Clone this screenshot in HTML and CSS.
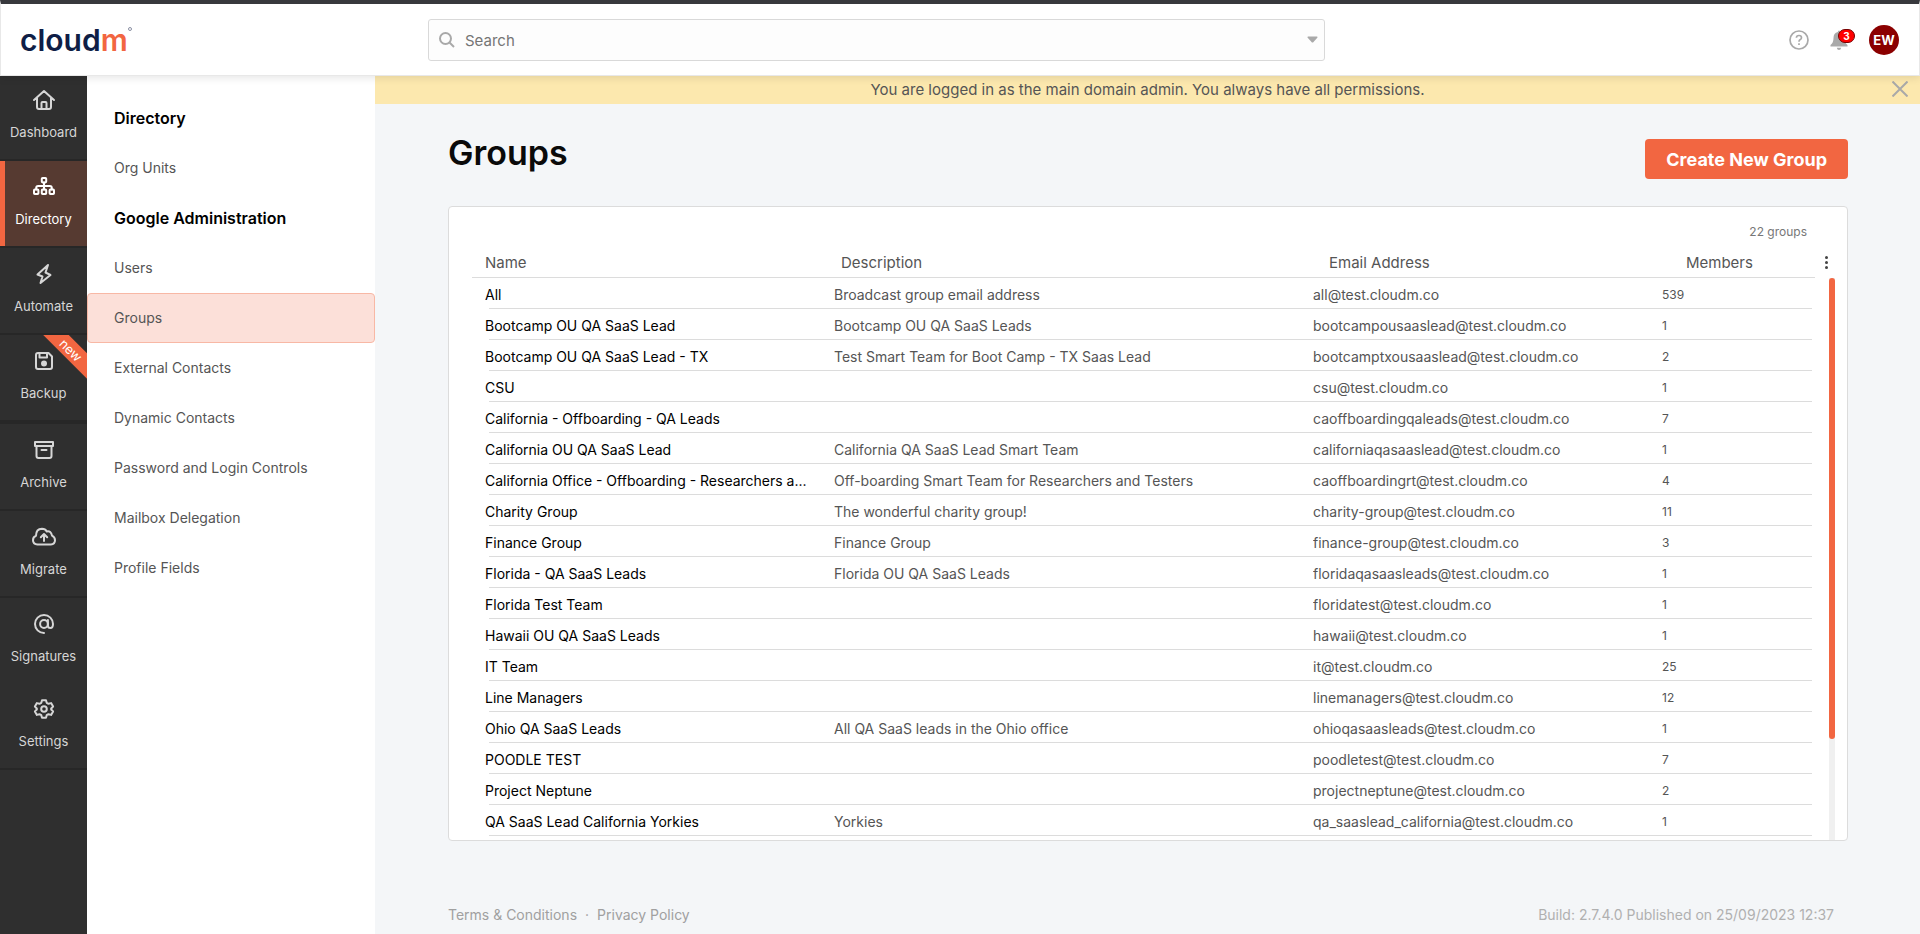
FILE: index.html
```html
<!DOCTYPE html>
<html lang="en">
<head>
<meta charset="UTF-8">
<meta name="viewport" content="width=device-width, initial-scale=1.0">
<title>Groups</title>
<link rel="stylesheet" href="styles.css">
</head>
<body>
<header class="topbar">
<a class="logo" href="#">cloud<span class="logo-m">m</span><span class="logo-mark"></span></a>
<form class="search">
<svg class="search-icon" width="16" height="16" viewBox="0 0 16 16"><circle cx="6.5" cy="6.5" r="5.5"/><path d="M10.5 10.5L15 15"/></svg>
<input type="text" placeholder="Search" aria-label="Search">
<button type="button" class="search-more" aria-label="Search options"><svg width="11" height="7" viewBox="0 0 11 7"><path d="M1 0.5h9Q11 1 10.3 1.8L6.5 6Q5.5 7 4.5 6L0.7 1.8Q0 1 1 0.5z"/></svg></button>
</form>
<div class="topbar-actions">
<button class="icon-btn" aria-label="Help">
<svg width="20" height="20" viewBox="0 0 20 20" fill="none" stroke="#a9a9a9" stroke-width="1.7"><circle cx="10" cy="10" r="9"/><path d="M7.4 7.8Q7.5 5.5 10 5.5Q12.5 5.500 12.5 7.7Q12.5 9 11 9.7Q10 10.2 10 11.7M10 13.200v1.8"/></svg>
</button>
<button class="icon-btn bell" aria-label="Notifications">
<svg width="18" height="20" viewBox="0 0 18 20" fill="#a9a9a9"><path d="M9 0.5Q10.2 0.5 10.2 2Q14.5 3 14.5 8Q14.5 13 17.5 15V16.5H0.5V15Q3.5 13 3.5 8Q3.5 3 7.8 2Q7.8 0.5 9 0.5zM6.8 17.8h4.4Q10.8 20 9 20Q7.2 20 6.8 17.8z"/></svg>
<span class="badge">3</span>
</button>
<button class="avatar">EW</button>
</div>
</header>

<div class="layout">
<nav class="rail">
<a href="#" class="rail-item">
<svg width="24" height="24" viewBox="0 0 24 24"><path d="M2 12L12 3l10 9M5 10v9q0 2 2 2h10q2 0 2-2v-9M9.5 21v-6q0-1 1-1h3q1 0 1 1v6"/></svg>
<span>Dashboard</span>
</a>
<a href="#" class="rail-item active">
<svg width="24" height="24" viewBox="0 0 24 24"><rect x="9.8" y="3" width="4.4" height="4.4" rx="0.8"/><rect x="2" y="14.6" width="4.4" height="4.4" rx="0.8"/><rect x="9.8" y="14.6" width="4.4" height="4.4" rx="0.8"/><rect x="17.6" y="14.6" width="4.4" height="4.4" rx="0.8"/><path d="M12 7.4v7M4.2 14.4v-1.4q0-2 2-2h11.600q2 0 2 2v1.4"/></svg>
<span>Directory</span>
</a>
<a href="#" class="rail-item">
<svg width="24" height="24" viewBox="0 0 24 24"><path d="M16 3L5.5 12.5l5 2L8.5 21L18.500 13l-5-2.500z"/></svg>
<span>Automate</span>
</a>
<a href="#" class="rail-item backup">
<svg width="24" height="24" viewBox="0 0 24 24"><path d="M6 4h10.5L20 7.5V18q0 2-2 2H6q-2 0-2-2V6q0-2 2-2zM7.5 4v4.5h7.5V4"/><circle cx="12" cy="14.5" r="2" fill="#d6d6d6"/></svg>
<span>Backup</span>
<span class="ribbon">new</span>
</a>
<a href="#" class="rail-item">
<svg width="24" height="24" viewBox="0 0 24 24"><path d="M3 4h18v4H3zM4.5 8v10q0 2 2 2h11q2 0 2-2V8M9.5 12h5"/></svg>
<span>Archive</span>
</a>
<a href="#" class="rail-item">
<svg width="24" height="24" viewBox="0 0 24 24"><path d="M5.5 19.5Q1 19 1 15.2Q1 12 4 10.8Q4 4 10 3.8Q13.3 3.8 14.8 6.5Q19 5.5 20 10.6Q23 12 23 15.2Q23 19 18.8 19.5zM12 16V9.500M8.800 12.300L12 9l3.200 3.300"/></svg>
<span>Migrate</span>
</a>
<a href="#" class="rail-item plain">
<svg width="24" height="24" viewBox="0 0 24 24"><circle cx="12" cy="12" r="3.9"/><path d="M15.9 8v5.5q0 2.5 2.5 2.5q2.6 0 2.6-4A9 9 0 1 0 12 21"/></svg>
<span>Signatures</span>
</a>
<a href="#" class="rail-item">
<svg width="24" height="24" viewBox="0 0 24 24"><circle cx="12" cy="12" r="2.8"/><path d="M10 3.200h4l0.700 2.600 1.800 1 2.600-0.700 2 3.500-1.900 1.900v1l1.900 1.900-2 3.500-2.600-0.700-1.800 1-0.700 2.600h-4l-0.700-2.600-1.800-1-2.600 0.700-2-3.500 1.900-1.900v-1L2.900 9.600l2-3.500 2.600 0.700 1.800-1z"/></svg>
<span>Settings</span>
</a>
</nav>

<nav class="submenu">
<h2>Directory</h2>
<a href="#">Org Units</a>
<h2>Google Administration</h2>
<a href="#">Users</a>
<a href="#" class="selected">Groups</a>
<a href="#">External Contacts</a>
<a href="#">Dynamic Contacts</a>
<a href="#">Password and Login Controls</a>
<a href="#">Mailbox Delegation</a>
<a href="#">Profile Fields</a>
</nav>

<main class="main">
<div class="banner">
<span>You are logged in as the main domain admin. You always have all permissions.</span>
<button class="banner-close" aria-label="Close"><svg width="16" height="16" viewBox="0 0 16 16"><path d="M0.5 0.5l15 15M15.5 0.5l-15 15"/></svg></button>
</div>
<div class="content">
<div class="page-head">
<h1>Groups</h1>
<button class="create-btn">Create New Group</button>
</div>

<section class="card">
<p class="count">22 groups</p>
<button class="table-menu" aria-label="Table options"><span></span><span></span><span></span></button>
<table>
<thead>
<tr><th>Name</th><th>Description</th><th>Email Address</th><th>Members</th></tr>
</thead>
<tbody>
<tr><td>All</td><td>Broadcast group email address</td><td>all@test.cloudm.co</td><td>539</td></tr>
<tr><td>Bootcamp OU QA SaaS Lead</td><td>Bootcamp OU QA SaaS Leads</td><td>bootcampousaaslead@test.cloudm.co</td><td>1</td></tr>
<tr><td>Bootcamp OU QA SaaS Lead - TX</td><td>Test Smart Team for Boot Camp - TX Saas Lead</td><td>bootcamptxousaaslead@test.cloudm.co</td><td>2</td></tr>
<tr><td>CSU</td><td></td><td>csu@test.cloudm.co</td><td>1</td></tr>
<tr><td>California - Offboarding - QA Leads</td><td></td><td>caoffboardingqaleads@test.cloudm.co</td><td>7</td></tr>
<tr><td>California OU QA SaaS Lead</td><td>California QA SaaS Lead Smart Team</td><td>californiaqasaaslead@test.cloudm.co</td><td>1</td></tr>
<tr><td>California Office - Offboarding - Researchers a...</td><td>Off-boarding Smart Team for Researchers and Testers</td><td>caoffboardingrt@test.cloudm.co</td><td>4</td></tr>
<tr><td>Charity Group</td><td>The wonderful charity group!</td><td>charity-group@test.cloudm.co</td><td>11</td></tr>
<tr><td>Finance Group</td><td>Finance Group</td><td>finance-group@test.cloudm.co</td><td>3</td></tr>
<tr><td>Florida - QA SaaS Leads</td><td>Florida OU QA SaaS Leads</td><td>floridaqasaasleads@test.cloudm.co</td><td>1</td></tr>
<tr><td>Florida Test Team</td><td></td><td>floridatest@test.cloudm.co</td><td>1</td></tr>
<tr><td>Hawaii OU QA SaaS Leads</td><td></td><td>hawaii@test.cloudm.co</td><td>1</td></tr>
<tr><td>IT Team</td><td></td><td>it@test.cloudm.co</td><td>25</td></tr>
<tr><td>Line Managers</td><td></td><td>linemanagers@test.cloudm.co</td><td>12</td></tr>
<tr><td>Ohio QA SaaS Leads</td><td>All QA SaaS leads in the Ohio office</td><td>ohioqasaasleads@test.cloudm.co</td><td>1</td></tr>
<tr><td>POODLE TEST</td><td></td><td>poodletest@test.cloudm.co</td><td>7</td></tr>
<tr><td>Project Neptune</td><td></td><td>projectneptune@test.cloudm.co</td><td>2</td></tr>
<tr><td>QA SaaS Lead California Yorkies</td><td>Yorkies</td><td>qa_saaslead_california@test.cloudm.co</td><td>1</td></tr>
</tbody>
</table>
<div class="scrollbar"><div class="thumb"></div></div>
</section>

<footer class="footer">
<div><a href="#">Terms &amp; Conditions</a><span class="dot">·</span><a href="#">Privacy Policy</a></div>
<span class="build">Build: 2.7.4.0 Published on 25/09/2023 12:37</span>
</footer>
</div>
</main>
</div>
</body>
</html>
```
FILE: styles.css
```css
* {
box-sizing: border-box;
}
body {
margin: 0;
font-family: Inter, sans-serif;
font-size: 14px;
color: #555;
background-color: #f4f6f8;
}
a {
color: inherit;
text-decoration: none;
}
button {
font-family: inherit;
border: none;
background: none;
padding: 0;
cursor: pointer;
}
svg {
display: block;
}

/* top bar */
.topbar {
position: relative;
z-index: 2;
display: grid;
grid-template-columns: 408px 1fr 574px;
align-items: center;
height: 76px;
padding: 0 20px 0 19px;
border: 1px solid #e8e8e8;
border-top: 4px solid #38393d;
background-color: #fff;
box-shadow: 0 2px 8px rgba(0, 0, 0, 0.1);
}
.logo {
display: flex;
align-items: center;
justify-self: start;
font-size: 30px;
font-weight: 600;
line-height: 38px;
color: #0f1e46;
}
.logo-m {
color: #f26641;
}
.logo-mark {
align-self: flex-start;
width: 4px;
height: 4px;
margin-top: 6px;
border: 1px solid #8a90a3;
border-radius: 50%;
}
.search {
display: flex;
align-items: center;
height: 42px;
padding: 0 6px 0 10px;
border: 1px solid #d9d9d9;
border-radius: 3px;
background-color: #fdfdfd;
}
.search-icon {
fill: none;
stroke: #a9a9a9;
stroke-width: 2;
}
.search input {
flex: 1;
margin-left: 10px;
padding: 3px 0 0;
border: none;
outline: none;
background: none;
font-family: inherit;
font-size: 15px;
line-height: 24px;
}
.search input::placeholder {
color: #757575;
}
.search-more svg {
fill: #a9a9a9;
}
.topbar-actions {
display: flex;
align-items: center;
justify-content: flex-end;
gap: 21px;
}
.bell {
position: relative;
}
.badge {
position: absolute;
top: -1px;
left: 8px;
width: 17px;
height: 14px;
border: 1px solid #700;
border-radius: 7px;
background-color: #f00;
color: #fff;
font-size: 10px;
font-weight: 700;
line-height: 12px;
text-align: center;
}
.avatar {
width: 30px;
height: 30px;
border-radius: 50%;
background-color: #8b0000;
color: #fff;
font-size: 13px;
font-weight: 700;
}

.layout {
display: flex;
min-height: calc(100vh - 76px);
}

/* dark rail */
.rail {
flex: 0 0 87px;
margin-top: -2px;
background-color: #2f2f2f;
}
.rail-item {
display: flex;
flex-direction: column;
align-items: center;
gap: 12px;
height: 87px;
padding-top: 14px;
border-bottom: 2px solid #272727;
color: #d6d6d6;
font-size: 13px;
line-height: 16px;
}
.rail-item svg {
fill: none;
stroke: currentColor;
stroke-width: 2;
stroke-linejoin: round;
stroke-linecap: round;
}
.rail-item.active {
padding-right: 5px;
background-color: #563a31;
box-shadow: inset 5px 0 #f26641;
padding-left: 5px;
color: #fff;
}
.rail-item.plain {
height: 85px;
border-bottom: none;
}
.rail-item.backup {
position: relative;
overflow: hidden;
height: 89px;
border-bottom-width: 4px;
}
.ribbon {
position: absolute;
top: 6px;
right: -26px;
width: 84px;
height: 18px;
background-color: #f26641;
color: #fff;
line-height: 18px;
text-align: center;
transform: rotate(45deg);
}

/* section menu */
.submenu {
flex: 0 0 288px;
padding-top: 17px;
background-color: #fff;
}
.submenu h2,
.submenu a {
display: flex;
align-items: center;
height: 50px;
margin: 0;
padding: 0 0 1px 26px;
border: 1px solid transparent;
font-size: 14px;
}
.submenu h2 {
color: #000;
font-size: 16px;
font-weight: 600;
}
.submenu .selected {
border-color: #f8b8a5;
border-radius: 4px;
background-color: #fce0d9;
}

/* main area */
.main {
flex: 1;
min-width: 0;
}
.banner {
position: relative;
height: 28px;
background-color: #fce8ae;
font-size: 15px;
line-height: 28px;
text-align: center;
}
.banner-close {
position: absolute;
top: 5px;
right: 12px;
}
.banner-close svg {
fill: none;
stroke: #a9a9a9;
stroke-width: 2;
}
.content {
padding: 35px 72px 0 73px;
}
.page-head {
display: flex;
justify-content: space-between;
margin-bottom: 27px;
}
h1 {
margin: 0;
color: #0a0a0a;
font-size: 34px;
font-weight: 600;
line-height: 28px;
}
.create-btn {
height: 40px;
padding: 0 21px;
border-radius: 4px;
background-color: #f26641;
color: #fff;
font-size: 18px;
font-weight: 700;
}

/* groups table */
.card {
position: relative;
padding: 17px 32px 4px 23px;
border: 1px solid #dcdcdc;
border-radius: 4px;
background-color: #fff;
}
.count {
margin: 0 0 7px;
padding-right: 8px;
color: #777;
font-size: 12px;
line-height: 16px;
text-align: right;
}
.table-menu {
position: absolute;
top: 49px;
right: 19px;
display: grid;
gap: 2px;
}
.table-menu span {
width: 3px;
height: 3px;
border-radius: 50%;
background-color: #444;
}
table,
thead,
tbody {
display: block;
}
tr {
display: grid;
}
thead tr {
grid-template-columns: 356fr 488fr 357fr 129fr;
height: 31px;
padding-left: 13px;
border-bottom: 1px solid #dcdcdc;
}
tbody tr {
position: relative;
grid-template-columns: 349fr 479fr 349fr 150fr;
height: 31px;
margin: 0 3px 0 13px;
}
tbody tr::after {
content: "";
position: absolute;
left: 4px;
right: 0;
bottom: 0;
border-bottom: 1px solid #dcdcdc;
}
th {
padding: 0;
font-size: 15px;
font-weight: 400;
line-height: 32px;
text-align: left;
}
td {
padding: 0 20px 0 0;
overflow: hidden;
text-overflow: ellipsis;
white-space: nowrap;
line-height: 34px;
}
td:first-child {
color: #000;
}
td:last-child {
font-size: 12px;
}
.scrollbar {
position: absolute;
top: 71px;
right: 12px;
bottom: 0;
width: 6px;
background-color: #f0f0f0;
}
.thumb {
height: 82%;
border-radius: 3px;
background-color: #f26641;
}

.footer {
display: flex;
justify-content: space-between;
padding: 64px 14px 10px 0;
color: #a0a0a0;
line-height: 20px;
}
.dot {
margin: 0 8px;
}
.build {
color: #b0b0b0;
}
```
